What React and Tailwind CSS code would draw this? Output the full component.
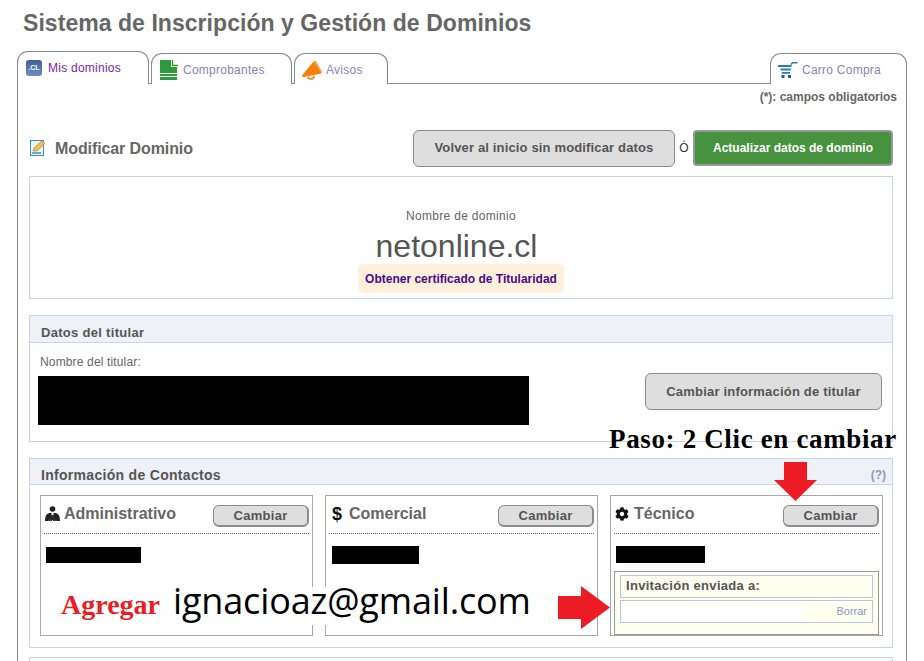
import React from 'react';
import { FaCog } from 'react-icons/fa';

const DocIcon = () => (
  <svg width="18" height="20" viewBox="0 0 18 20" className="shrink-0">
    <path d="M0 0H11V7H17V20H0Z" fill="#2f9a3c" />
    <path d="M12.5 0V5.5H18" fill="none" stroke="#2f9a3c" strokeWidth="1.4" />
    <path d="M0 13.5H17M0 16.5H17" stroke="#fff" strokeWidth="1" />
  </svg>
);

const MegaphoneIcon = () => (
  <svg width="22" height="20" viewBox="0 0 22 20" className="shrink-0">
    <path d="M1 15.5L13 1L15 1.5L21 12L20 13.5L3 17L1 16.5Z" fill="#f57f0a" />
    <path d="M13.5 1.5L20.5 12.5" stroke="#ffb566" strokeWidth="1" />
    <path d="M7 16.5C7 20 13 20 13 15.5" fill="none" stroke="#f57f0a" strokeWidth="1.6" />
  </svg>
);

const CartIcon = () => (
  <svg width="20" height="16" viewBox="0 0 20 16" className="shrink-0">
    <path d="M13 2.5L14.5 0.8H19.5" fill="none" stroke="#2a7ab8" strokeWidth="1.5" />
    <path d="M0 3H14L13 5H0ZM2 6.5H13L12.5 8.5H3ZM3.5 10H12.3L12 11.8H4Z" fill="#2a7ab8" />
    <rect x="3.5" y="13" width="3" height="3" fill="#1c5d92" />
    <rect x="10" y="13" width="3" height="3" fill="#1c5d92" />
  </svg>
);

const EditIcon = () => (
  <svg width="16" height="16" viewBox="0 0 16 16" className="shrink-0">
    <rect x="0.5" y="0.5" width="13" height="15" fill="#e9f4fc" stroke="#3d8fd1" />
    <path d="M2 13H11" stroke="#3d8fd1" strokeWidth="1.5" />
    <path d="M3 11L4 8L12 0.8L15 3.5L7 11Z" fill="#f0c04f" stroke="#b5852b" strokeWidth="0.7" />
  </svg>
);

const PeopleIcon = () => (
  <svg width="15" height="16" viewBox="0 0 15 16" className="shrink-0">
    <circle cx="7.5" cy="3" r="2.8" fill="#222" />
    <path d="M0 15C0 8.5 2.5 7 6.5 7L7 15ZM15 15C15 8.5 12.5 7 8.5 7L8 15Z" fill="#222" />
    <rect x="6.5" y="9" width="2" height="5" fill="#222" />
    <path d="M3 15H6.3V13.6H3ZM8.7 15H12V13.6H8.7Z" fill="#444" />
  </svg>
);

const Tab = ({ icon, label, className }) => (
  <div className={`flex items-center h-[31px] pt-[2px] border border-b-0 border-[#8a8a8a] rounded-t-[11px] bg-white text-xs tracking-[0.25px] text-[#8d7fb8] ${className}`}>
    {icon}
    <span>{label}</span>
  </div>
);

const GrayButton = ({ children, className }) => (
  <button className={`bg-[#dedede] border border-[#8c8c8c] font-bold text-[#555] ${className}`}>
    {children}
  </button>
);

const ContactCard = ({ icon, title, barClass, children }) => (
  <div className="w-[273px] h-[141px] border border-[#a8a8a8] px-[3px] pt-2">
    <div className="flex items-center justify-between h-[30px] pb-[3px] border-b border-dotted border-[#555]">
      <div className="flex items-center gap-[4px] pl-[1px] mt-[-6px] text-base font-bold text-[#666]">
        {icon}
        <span>{title}</span>
      </div>
      <GrayButton className="w-[96px] h-[22px] rounded-[6px] text-[13px] tracking-[0.3px] border-b-2 border-r-2 mt-[-2px]">Cambiar</GrayButton>
    </div>
    <div className={`bg-black ${barClass}`} />
    {children}
  </div>
);

export default function App() {
  return (
    <div className="relative w-[924px] h-[661px] overflow-hidden bg-white font-['Liberation_Sans',Arial,sans-serif]">
      <h1 className="pl-[23px] pt-[10px] h-[51px] text-[23px] leading-[26px] font-bold tracking-[0.05px] text-[#666]">
        Sistema de Inscripción y Gestión de Dominios
      </h1>

      {/* tabs */}
      <div className="relative z-10 flex items-end h-[33px] ml-[17px] w-[890px] gap-[2px] mb-[-1px]">
        <div className="flex items-center gap-[5px] w-[132px] h-[33px] pl-[8px] border border-b-0 border-[#8a8a8a] rounded-t-[11px] bg-white text-xs tracking-[0.25px] text-[#7a1fa0]">
          <div className="flex items-center justify-center w-4 h-4 rounded-[3px] bg-gradient-to-b from-[#3f5f9f] to-[#6f8cc4] text-[7px] font-bold tracking-normal text-white">.CL</div>
          <span className="ml-[1px]">Mis dominios</span>
        </div>
        <Tab icon={<DocIcon />} label="Comprobantes" className="w-[141px] gap-[5px] pl-[8px]" />
        <Tab icon={<MegaphoneIcon />} label="Avisos" className="w-[94px] gap-[3px] pl-[6px]" />
        <Tab icon={<CartIcon />} label="Carro Compra" className="w-[137px] gap-[4px] pl-[7px] ml-auto" />
      </div>

      {/* main panel */}
      <div className="ml-[17px] w-[890px] h-[600px] border border-[#8a8a8a] pl-[11px] pr-[13px]">
        <p className="h-[24px] pt-[6px] mr-[-4px] text-right text-xs leading-[14px] font-bold text-[#666]">(*): campos obligatorios</p>

        <div className="flex items-center h-[38px] mt-[21px] mb-[9px]">
          <div className="ml-[1px] mr-[9px]"><EditIcon /></div>
          <h2 className="pt-[2px] text-base font-bold text-[#666] tracking-[-0.1px]">Modificar Dominio</h2>
          <GrayButton className="ml-auto w-[262px] h-[37px] rounded-[6px] text-[13px] tracking-[0.15px]">Volver al inicio sin modificar datos</GrayButton>
          <span className="w-[18px] text-center text-xs text-[#333]">Ó</span>
          <button className="w-[200px] h-[36px] rounded-[4px] bg-[#47923f] border-2 border-[#999] text-xs font-bold text-white">Actualizar datos de dominio</button>
        </div>

        {/* dominio */}
        <section className="flex flex-col items-center h-[123px] border border-[#c5d5ea] pt-[32px]">
          <p className="text-xs leading-[14px] tracking-[0.3px] text-[#666]">Nombre de dominio</p>
          <p className="mt-[5px] mr-[9px] text-[32px] leading-[36px] text-[#555]">netonline.cl</p>
          <div className="flex items-center h-[29px] mt-0 px-[7px] rounded-[5px] bg-[#fff0dc] text-xs font-bold text-[#4b0a8c] whitespace-nowrap">
            Obtener certificado de Titularidad
          </div>
        </section>

        {/* titular */}
        <section className="mt-4 h-[127px] border border-[#c5d5ea]">
          <h3 className="h-[27px] pl-[11px] pt-[9px] bg-[#eef1f6] border-b border-[#c5d5ea] text-[13px] leading-[16px] font-bold text-[#555] tracking-[0.3px]">Datos del titular</h3>
          <p className="pl-[10px] pt-[12px] text-xs leading-[14px] tracking-[0.15px] text-[#666]">Nombre del titular:</p>
          <div className="flex items-start pt-[7px]">
            <div className="ml-2 w-[491px] h-[49px] bg-black" />
            <GrayButton className="ml-[116px] mt-[-3px] w-[237px] h-[37px] rounded-[6px] text-[13px] tracking-[0.2px]">Cambiar información de titular</GrayButton>
          </div>
        </section>

        {/* contactos */}
        <section className="mt-4 h-[190px] border border-[#c5d5ea]">
          <div className="flex items-center justify-between h-[26px] pl-[11px] pr-[6px] pt-[6px] bg-[#eef1f6] border-b border-[#c5d5ea]">
            <h3 className="text-sm font-bold text-[#555] tracking-[0.3px]">Información de Contactos</h3>
            <span className="text-xs font-bold text-[#8a98c4]">(?)</span>
          </div>
          <div className="flex gap-3 pl-[10px] pt-[10px]">
            <ContactCard icon={<PeopleIcon />} title="Administrativo" barClass="mt-[13px] ml-[2px] w-[95px] h-[16px]" />
            <ContactCard icon={<span className="ml-[2px] mr-[1px] w-[12px] text-lg leading-none text-[#111]">$</span>} title="Comercial" barClass="mt-[12px] ml-[3px] w-[87px] h-[18px]" />
            <ContactCard icon={<FaCog className="mr-[1px] text-[14px] text-[#111]" />} title="Técnico" barClass="mt-[12px] ml-[2px] w-[89px] h-[17px]">
              <div className="mt-[8px] w-[265px] h-[64px] border border-[#999] bg-[#fffff0] px-[5px] pt-[3px]">
                <div className="h-[23px] pl-[5px] border border-[#b9c6e0] text-[13px] leading-[20px] font-bold text-[#555] tracking-[0.3px]">Invitación enviada a:</div>
                <div className="flex items-center justify-between h-[23px] mt-[2px] pl-[1px] pr-[5px] border border-[#b9c6e0]">
                  <div className="w-[181px] h-[16px] bg-white" />
                  <span className="text-[11px] text-[#8a98c4]">Borrar</span>
                </div>
              </div>
            </ContactCard>
          </div>
        </section>

        <div className="mt-[9px] h-[20px] border border-[#c5d5ea]" />
      </div>

      {/* anotaciones encima de la captura */}
      <p className="absolute left-[609px] top-[424px] font-['Liberation_Serif',serif] text-[27px] leading-[30px] font-bold text-black whitespace-nowrap tracking-[0.65px]">Paso: 2 Clic en cambiar</p>
      <p className="absolute left-[61px] top-[590px] font-['Liberation_Serif',serif] text-[28px] leading-[30px] font-bold text-[#ed1c24]">Agregar</p>
      <p className="absolute left-[171px] top-[587px] px-[2px] h-[38px] bg-white font-['Open_Sans',sans-serif] text-[36px] leading-[28px] font-medium tracking-[-0.15px] text-black whitespace-nowrap">ignacioaz@gmail.com</p>
      <svg className="absolute left-[774px] top-[462px]" width="43" height="39" viewBox="0 0 43 39">
        <path d="M10 0H33V18H43L21.5 39L0 18H10Z" fill="#ed1c24" />
      </svg>
      <svg className="absolute left-[558px] top-[586px]" width="52" height="43" viewBox="0 0 52 43">
        <path d="M0 10H23V0L52 21.5L23 43V33H0Z" fill="#ed1c24" />
      </svg>
    </div>
  );
}
